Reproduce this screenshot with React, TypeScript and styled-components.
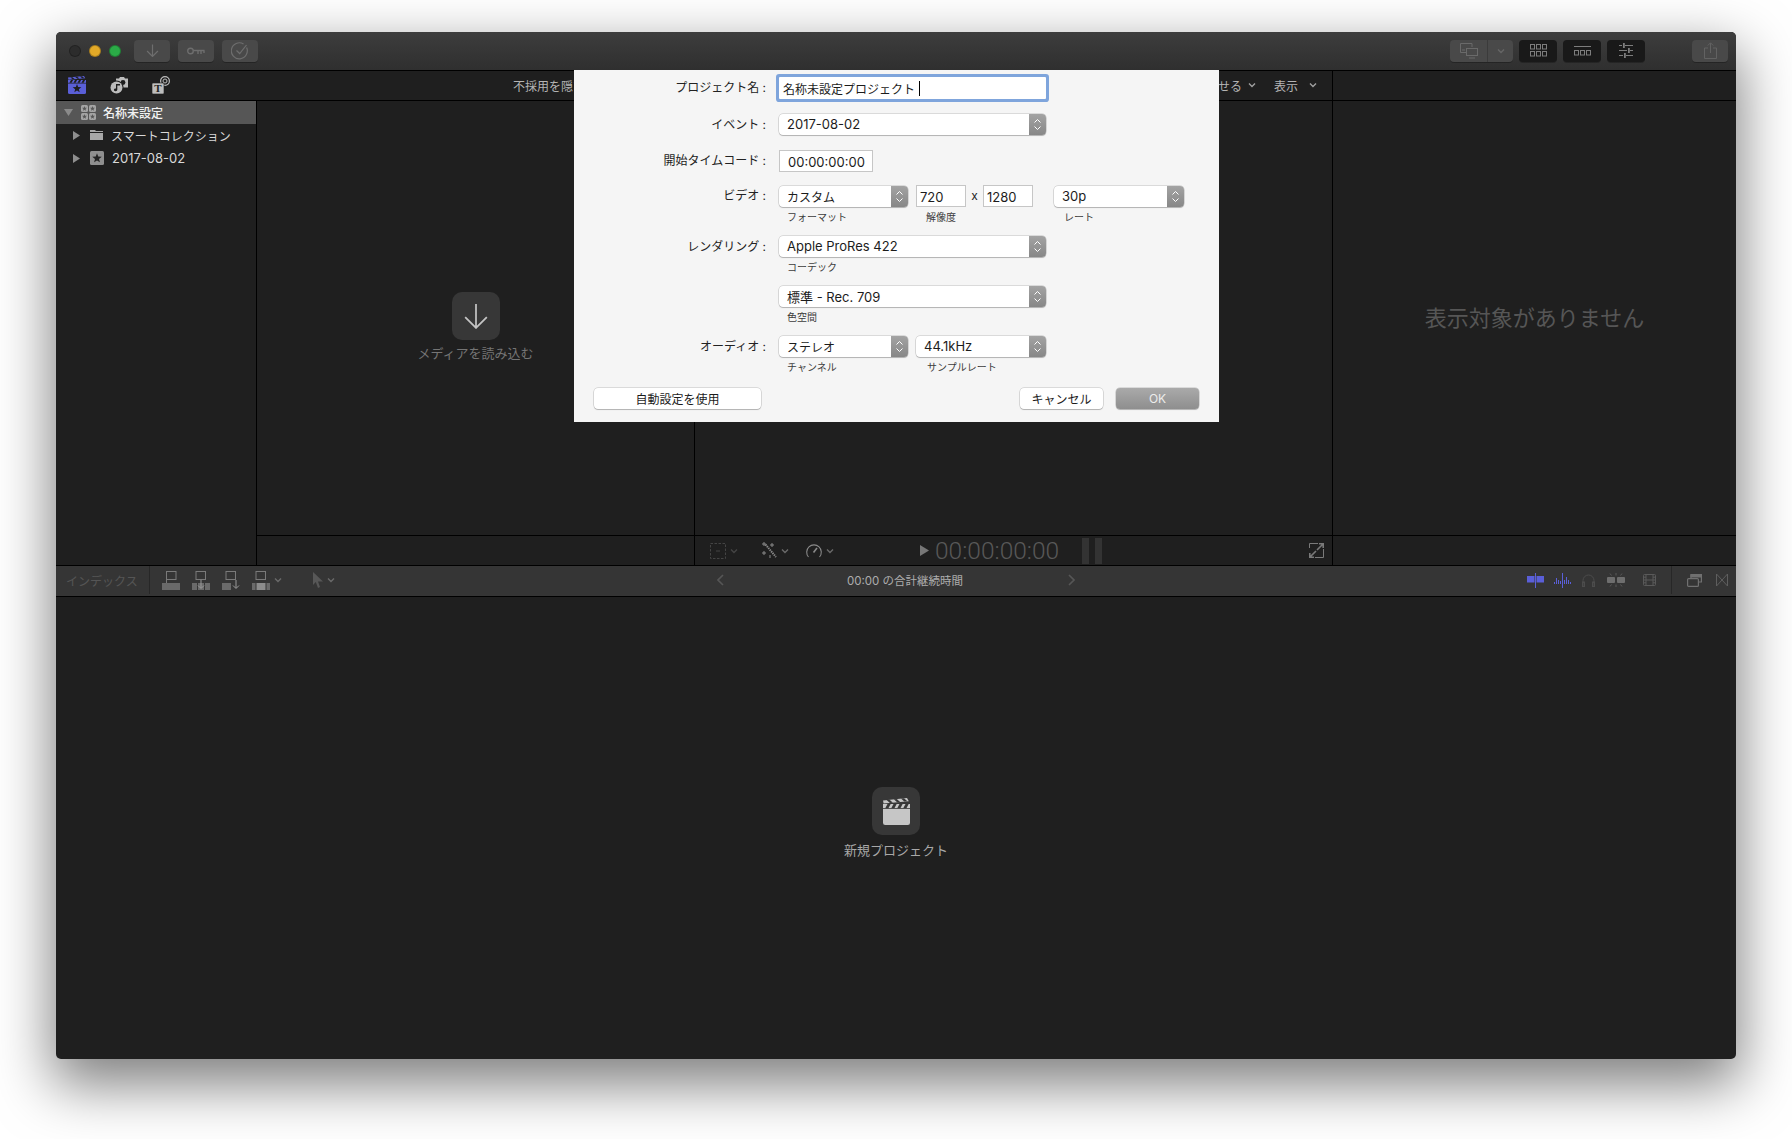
import React from "react";
import styled, { createGlobalStyle } from "styled-components";

const GlobalStyle = createGlobalStyle`
  html, body {
    margin: 0;
    background: #fff;
  }
  * {
    box-sizing: border-box;
  }
`;

const uiFont = `Inter, "Noto Sans CJK JP", sans-serif`;

const Page = styled.div`
  width: 1792px;
  height: 1139px;
  padding: 32px 56px 0;
  overflow: hidden;
  font-family: ${uiFont};
`;

const AppWindow = styled.div`
  position: relative;
  display: flex;
  flex-direction: column;
  width: 1680px;
  height: 1027px;
  background: #1f1f1f;
  border-radius: 5px;
  box-shadow: 0 22px 56px 4px rgba(0, 0, 0, 0.5);
`;

/* title bar */
const TitleBar = styled.div`
  display: flex;
  align-items: center;
  flex: none;
  height: 39px;
  padding: 0 8px 1px 13px;
  background: linear-gradient(#3d3d3d, #2f2f2f);
  border-bottom: 1px solid #000;
  border-radius: 5px 5px 0 0;
`;

const Lights = styled.div`
  display: flex;
  gap: 8px;
  margin-right: 13px;
`;

const Light = styled.span<{ $color: string }>`
  width: 12px;
  height: 12px;
  border-radius: 50%;
  background: ${({ $color }) => $color};
  border: 1px solid rgba(0, 0, 0, 0.25);
`;

const TitleGroup = styled.div<{ $gap: number }>`
  display: flex;
  gap: ${({ $gap }) => $gap}px;
`;

const TitleButton = styled.div<{ $dark?: boolean; $w?: number; $ml?: number }>`
  display: flex;
  align-items: center;
  justify-content: center;
  width: ${({ $w }) => $w ?? 36}px;
  height: 22px;
  margin-left: ${({ $ml }) => $ml ?? 0}px;
  border-radius: 4px;
  background: ${({ $dark }) => ($dark ? "#191919" : "#494949")};
  box-shadow: 0 1px 0 rgba(0, 0, 0, 0.25);
`;

const SplitSeg = styled.div<{ $w: number; $line?: boolean }>`
  display: flex;
  align-items: center;
  justify-content: center;
  width: ${({ $w }) => $w}px;
  height: 100%;
  border-left: ${({ $line }) => ($line ? "1px solid #3b3b3b" : "none")};
`;

const Spacer = styled.div`
  flex: 1;
`;

/* library toolbar */
const ToolRow = styled.div`
  display: flex;
  flex: none;
  height: 30px;
  border-bottom: 1px solid #000;
`;

const LibraryTools = styled.div`
  display: flex;
  align-items: center;
  width: 1277px;
  padding: 0 15px 1px 12px;
  border-right: 1px solid #000;
`;

const LibraryIcons = styled.div`
  display: flex;
  align-items: center;
  gap: 24px;
`;

const ToolText = styled.span<{ $ml?: number; $gap?: number }>`
  display: inline-flex;
  align-items: center;
  gap: ${({ $gap }) => $gap ?? 6}px;
  margin-left: ${({ $ml }) => $ml ?? 0}px;
  font-size: 12px;
  color: #b4b4b4;
  white-space: nowrap;
`;

/* panels */
const Panels = styled.div`
  display: flex;
  flex: none;
  height: 465px;
  border-bottom: 1px solid #000;
`;

const Sidebar = styled.div`
  flex: none;
  width: 201px;
  border-right: 1px solid #000;
`;

const TreeRow = styled.div<{ $selected?: boolean; $indent: number }>`
  display: flex;
  align-items: center;
  height: 23px;
  padding: 0 0 1px ${({ $indent }) => $indent}px;
  background: ${({ $selected }) => ($selected ? "#565656" : "transparent")};
  color: ${({ $selected }) => ($selected ? "#f2f2f2" : "#d8d8d8")};
  font-size: 12px;
  font-weight: ${({ $selected }) => ($selected ? 500 : 400)};
  white-space: nowrap;
`;

const TreeIcon = styled.span<{ $mr: number }>`
  display: flex;
  margin-right: ${({ $mr }) => $mr}px;
`;

const EventDate = styled.span`
  font-size: 13px;
`;

const PanelColumn = styled.div<{ $w: number; $line?: boolean }>`
  display: flex;
  flex-direction: column;
  flex: none;
  width: ${({ $w }) => $w}px;
  border-right: ${({ $line }) => ($line ? "1px solid #000" : "none")};
`;

const PanelBody = styled.div<{ $pt?: number; $pb?: number }>`
  display: flex;
  flex: 1;
  flex-direction: column;
  align-items: center;
  justify-content: center;
  padding-top: ${({ $pt }) => $pt ?? 0}px;
  padding-bottom: ${({ $pb }) => $pb ?? 0}px;
`;

const PanelFooter = styled.div`
  display: flex;
  align-items: center;
  flex: none;
  height: 30px;
  padding-left: 15px;
  border-top: 1px solid #000;
`;

const Tile = styled.div`
  display: flex;
  align-items: center;
  justify-content: center;
  width: 48px;
  height: 48px;
  border-radius: 10px;
  background: #373737;
`;

const TileCaption = styled.div<{ $bright?: boolean }>`
  margin-top: ${({ $bright }) => ($bright ? 7 : 5)}px;
  font-size: 13px;
  line-height: 17px;
  color: ${({ $bright }) => ($bright ? "#a8a8a8" : "#757575")};
`;

const EmptyMessage = styled.div`
  font-size: 22px;
  color: #565656;
`;

const FooterTool = styled.div<{ $ml?: number }>`
  display: flex;
  align-items: center;
  gap: 4px;
  margin-left: ${({ $ml }) => $ml ?? 0}px;
`;

const Timecode = styled.div`
  margin-left: 2px;
  font-family: Roboto, sans-serif;
  font-size: 24.5px;
  font-weight: 300;
  color: #585858;
`;

const Meter = styled.div`
  display: flex;
  gap: 6px;
  margin-left: 23px;
`;

const MeterBar = styled.span`
  width: 7px;
  height: 26px;
  background: #333;
`;

const FullscreenTool = styled.div`
  margin-left: auto;
  margin-right: 8px;
  display: flex;
`;

/* timeline bar */
const TimelineBar = styled.div`
  display: grid;
  grid-template-columns: 1fr 358px 1fr;
  align-items: center;
  flex: none;
  height: 31px;
  padding-bottom: 2px;
  background: #353535;
  border-bottom: 1px solid #000;
`;

const BarLeft = styled.div`
  display: flex;
  align-items: center;
  height: 100%;
`;

const IndexTab = styled.div`
  display: flex;
  align-items: center;
  width: 94px;
  height: 100%;
  padding-left: 10px;
  border-right: 1px solid #272727;
  font-size: 12px;
  color: #555;
`;

const BarCenter = styled.div`
  display: flex;
  align-items: center;
  justify-content: space-between;
`;

const Duration = styled.span`
  flex: 1;
  padding-left: 18px;
  text-align: center;
  font-size: 11.5px;
  color: #adadad;
`;

const BarRight = styled.div`
  display: flex;
  align-items: center;
  justify-content: flex-end;
  height: 100%;
  padding-right: 8px;
`;

const RightDivider = styled.span`
  align-self: stretch;
  width: 1px;
  margin: 0 15px;
  background: #272727;
`;

const BarTool = styled.div<{ $ml?: number }>`
  display: flex;
  align-items: center;
  gap: 4px;
  margin-left: ${({ $ml }) => $ml ?? 0}px;
`;

const TimelineBody = styled.div`
  display: flex;
  flex: 1;
  flex-direction: column;
  align-items: center;
  justify-content: center;
  padding-bottom: 10px;
  border-radius: 0 0 5px 5px;
`;

/* project dialog */
const Dialog = styled.div`
  position: absolute;
  top: 38px;
  left: 518px;
  display: flex;
  flex-direction: column;
  width: 645px;
  height: 352px;
  padding-top: 7px;
  background: #f5f5f5;
  color: #1c1c1c;
`;

const FormRow = styled.div<{ $mt: number }>`
  display: grid;
  grid-template-columns: 192px 1fr;
  column-gap: 13px;
  align-items: start;
  margin-top: ${({ $mt }) => $mt}px;
`;

const RowLabel = styled.div<{ $lh?: number }>`
  font-size: 12px;
  line-height: ${({ $lh }) => $lh ?? 21}px;
  text-align: right;
  white-space: pre;
  color: #222;
`;

const Controls = styled.div`
  display: flex;
  align-items: flex-start;
`;

const ControlCol = styled.div<{ $ml?: number }>`
  display: flex;
  flex-direction: column;
  margin-left: ${({ $ml }) => $ml ?? 0}px;
`;

const SubLabel = styled.div<{ $pl?: number }>`
  height: 12px;
  margin-top: 4px;
  padding-left: ${({ $pl }) => $pl ?? 8}px;
  font-size: 10px;
  line-height: 12px;
  color: #3c3c3c;
  white-space: nowrap;
`;

const Select = styled.div<{ $w: number; $inset?: boolean }>`
  display: flex;
  align-items: center;
  justify-content: space-between;
  width: ${({ $w }) => $w}px;
  height: 21px;
  margin-top: ${({ $inset }) => ($inset ? 1 : 0)}px;
  padding-left: 8px;
  background: #fff;
  border-radius: 4px;
  box-shadow: 0 0 0 0.5px rgba(0, 0, 0, 0.22), 0 1px 1px rgba(0, 0, 0, 0.18);
  font-size: 13px;
  overflow: hidden;
`;

const SelectText = styled.span<{ $jp?: boolean }>`
  padding-bottom: 1px;
  font-size: ${({ $jp }) => ($jp ? 12 : 13)}px;
`;

const Stepper = styled.span`
  display: flex;
  align-items: center;
  justify-content: center;
  width: 17px;
  height: 100%;
  background: linear-gradient(#a3a3a3, #878787);
`;

const TextBox = styled.div<{ $w: number; $pl?: number }>`
  display: flex;
  align-items: center;
  width: ${({ $w }) => $w}px;
  height: 22px;
  padding: 1px 0 0 ${({ $pl }) => $pl ?? 3}px;
  background: #fff;
  border: 1px solid #c6c6c6;
  font-size: 13px;
`;

const NameBox = styled(TextBox)`
  padding: 0 0 0 4px;
  border: none;
  border-radius: 1px;
  box-shadow: 0 0 0 3px #7fa5dc;
  font-size: 12px;
`;

const Caret = styled.span`
  width: 1px;
  height: 15px;
  margin-left: 4px;
  background: #000;
`;

const Times = styled.span`
  width: 17px;
  line-height: 22px;
  text-align: center;
  font-size: 12px;
`;

const DialogFooter = styled.div`
  display: flex;
  margin-top: 15px;
  padding: 0 20px;
`;

const DialogButton = styled.div<{ $w: number; $primary?: boolean; $ml?: string }>`
  display: flex;
  align-items: center;
  justify-content: center;
  width: ${({ $w }) => $w}px;
  height: 21px;
  padding-bottom: 1px;
  margin-left: ${({ $ml }) => $ml ?? "0"};
  border-radius: 4px;
  background: ${({ $primary }) => ($primary ? "linear-gradient(#aaa, #8e8e8e)" : "#fff")};
  color: ${({ $primary }) => ($primary ? "#ececec" : "#1c1c1c")};
  box-shadow: 0 0 0 0.5px rgba(0, 0, 0, 0.22), 0 1px 1px rgba(0, 0, 0, 0.18);
  font-size: 12px;
`;

/* drawings */
const starPoints = (cx: number, cy: number, r: number) =>
  Array.from({ length: 10 }, (_, i) => {
    const a = (Math.PI / 5) * i - Math.PI / 2;
    const d = i % 2 ? r * 0.42 : r;
    return `${(cx + d * Math.cos(a)).toFixed(2)},${(cy + d * Math.sin(a)).toFixed(2)}`;
  }).join(" ");

const Chevron = ({ color = "#6a6a6a" }: { color?: string }) => (
  <svg width="8" height="6" viewBox="0 0 8 6" fill="none">
    <path d="M1 1.5 4 4.5 7 1.5" stroke={color} strokeWidth="1.4" />
  </svg>
);

const StepArrows = () => (
  <svg width="9" height="13" viewBox="0 0 9 13" fill="none" stroke="#fff" strokeWidth="1">
    <path d="M1.5 4.5 4.5 1.5 7.5 4.5M1.5 8.5 4.5 11.5 7.5 8.5" />
  </svg>
);

const ImportGlyph = ({ size, color, width = 1.4 }: { size: number; color: string; width?: number }) => (
  <svg width={size} height={size} viewBox="0 0 24 24" fill="none" stroke={color} strokeWidth={width}>
    <path d="M12 1V23M2 13 12 23 22 13" />
  </svg>
);

const KeyGlyph = () => (
  <svg width="18" height="10" viewBox="0 0 18 10" fill="none" stroke="#6e6e6e" strokeWidth="1.4">
    <circle cx="3.5" cy="5" r="2.8" />
    <path d="M6.5 4.5H17.5M11 4.5V8M14 4.5V8M17 4.5V7" />
  </svg>
);

const CheckGlyph = () => (
  <svg width="18" height="18" viewBox="0 0 18 18" fill="none" stroke="#6e6e6e" strokeWidth="1.2">
    <path d="M15.6 5.5A8 8 0 1 1 12.5 2" />
    <path d="M5.5 8.5 8.7 11.5 15.5 3" />
  </svg>
);

const MonitorGlyph = () => (
  <svg width="18" height="16" viewBox="0 0 18 16" fill="none" stroke="#6a6a6a" strokeWidth="1">
    <path d="M6 9.5H.5V.5H12V4" />
    <rect x="6.5" y="5.5" width="11" height="7" />
    <path d="M9 15H15M2 7H5" />
  </svg>
);

const GridGlyph = () => (
  <svg width="17" height="13" viewBox="0 0 17 13" fill="none" stroke="#7d7d7d" strokeWidth="1">
    {[0.5, 6.5, 12.5].map((x) =>
      [0.5, 7.5].map((y) => <rect key={`${x}-${y}`} x={x} y={y} width="4" height="4.5" />)
    )}
  </svg>
);

const StripGlyph = () => (
  <svg width="17" height="10" viewBox="0 0 17 10" fill="none" stroke="#7d7d7d" strokeWidth="1">
    <path d="M0 .5H17" />
    {[0.5, 6.5, 12.5].map((x) => (
      <rect key={x} x={x} y="4.5" width="4" height="4.5" />
    ))}
  </svg>
);

const SlidersGlyph = () => (
  <svg width="14" height="15" viewBox="0 0 14 15" fill="#7d7d7d" stroke="none">
    <path d="M0 2H3V3H0ZM6 2H14V3H6ZM0 7H8V8H0ZM11 7H14V8H11ZM0 12H4V13H0ZM7 12H14V13H7Z" />
    <rect x="4" y="0" width="1.8" height="5" />
    <rect x="9" y="5" width="1.8" height="5" />
    <rect x="5" y="10" width="1.8" height="5" />
  </svg>
);

const ShareGlyph = () => (
  <svg width="13" height="17" viewBox="0 0 13 17" fill="none" stroke="#626262" strokeWidth="1">
    <path d="M4 6H.5V16.5H12.5V6H9M6.5 11V1M3.8 3.5 6.5 .8 9.2 3.5" />
  </svg>
);

const ClapperGlyph = ({ size, color, star, gap }: { size: number; color: string; star?: string; gap: string }) => (
  <svg width={size} height={size} viewBox="0 0 18 18">
    <path d="M0 7.4H18V16.5A1.5 1.5 0 0 1 16.5 18H1.5A1.5 1.5 0 0 1 0 16.5Z" fill={color} />
    <path d="M0 4H18V6.8H0Z" fill={color} />
    <path d="M0 1.6 16 0 17.2 2.2 .4 3.7Z" fill={color} />
    <path
      d="M3 4 1.5 6.8H3.6L5.1 4ZM7 4 5.5 6.8H7.6L9.1 4ZM11 4 9.5 6.8H11.6L13.1 4ZM15 4 13.5 6.8H15.6L17.1 4ZM2.4 1.4 4.6 3.3 6.6 3.1 4.4 1.2ZM7.2 .9 9.4 2.8 11.4 2.6 9.2 .7ZM12 .4 14.2 2.3 16.2 2.1 14 .2Z"
      fill={gap}
    />
    {star && <polygon points={starPoints(9, 12.6, 4.6)} fill={star} />}
  </svg>
);

const MediaGlyph = () => (
  <svg width="18" height="18" viewBox="0 0 18 18" fill="#bdbdbd">
    <path d="M6 2.5H9L10 1H14L15 2.5H18V11.5H6Z" />
    <circle cx="13" cy="6.5" r="2.4" fill="#1f1f1f" />
    <circle cx="6.5" cy="11.5" r="7" fill="#1f1f1f" />
    <circle cx="6.5" cy="11.5" r="6" />
    <path d="M6 8H10V9.5H7.3V13.8A1.7 1.3 0 1 1 6 12.6Z" fill="#1f1f1f" />
  </svg>
);

const TitleGlyph = () => (
  <svg width="18" height="18" viewBox="0 0 18 18">
    <circle cx="13" cy="5" r="4.4" fill="none" stroke="#bdbdbd" strokeWidth="1.2" />
    <circle cx="13" cy="5" r="2" fill="none" stroke="#bdbdbd" strokeWidth="1" />
    <rect x="0" y="7" width="12" height="11" rx="1" fill="#bdbdbd" stroke="#1f1f1f" strokeWidth=".6" />
    <text x="6" y="16.4" textAnchor="middle" fontSize="11" fontWeight="700" fontFamily="Liberation Serif, serif" fill="#1f1f1f">
      T
    </text>
  </svg>
);

const TreeTriangle = ({ open }: { open?: boolean }) =>
  open ? (
    <svg width="9" height="7" viewBox="0 0 9 7">
      <path d="M0 0H9L4.5 7Z" fill="#8a8a8a" />
    </svg>
  ) : (
    <svg width="7" height="9" viewBox="0 0 7 9">
      <path d="M0 0V9L7 4.5Z" fill="#8e8e8e" />
    </svg>
  );

const LibraryGlyph = () => (
  <svg width="15" height="15" viewBox="0 0 15 15">
    {[0, 8].map((x) =>
      [0, 8].map((y) => (
        <g key={`${x}-${y}`}>
          <rect x={x} y={y} width="7" height="7" rx="1.5" fill="#a4a4a4" />
          <polygon points={starPoints(x + 3.5, y + 3.6, 2.6)} fill="#565656" />
        </g>
      ))
    )}
  </svg>
);

const FolderGlyph = () => (
  <svg width="13" height="10" viewBox="0 0 13 10" fill="#a8a8a8">
    <path d="M0 0H5L6 1H13V2H0ZM0 3H13V10H0Z" />
  </svg>
);

const EventGlyph = () => (
  <svg width="14" height="14" viewBox="0 0 14 14">
    <rect width="14" height="14" rx="1.5" fill="#8f8f8f" />
    <polygon points={starPoints(7, 7.3, 5)} fill="#232323" />
  </svg>
);

const TransformGlyph = () => (
  <svg width="16" height="16" viewBox="0 0 16 16" fill="none" stroke="#444" strokeWidth="1" strokeDasharray="2.5 1.5">
    <rect x=".5" y=".5" width="15" height="15" />
    <path d="M6 8H10" strokeDasharray="none" />
  </svg>
);

const WandGlyph = () => (
  <svg width="16" height="17" viewBox="0 0 16 17" fill="none" stroke="#8a8a8a" strokeWidth="1">
    <path d="M4.5 2.5 15 15" strokeWidth="2" strokeDasharray="1.4 .8" />
    <path d="M3 0V4M1 2H5M11 1V5M9 3H13M3 9V13M1 11H5M9 13V16" />
  </svg>
);

const GaugeGlyph = () => (
  <svg width="16" height="14" viewBox="0 0 16 14" fill="none" stroke="#8a8a8a" strokeWidth="1.1">
    <path d="M2.5 13A7.3 7.3 0 1 1 13.5 13" />
    <path d="M7.5 8.5 11 4" strokeWidth="1.6" />
  </svg>
);

const PlayGlyph = () => (
  <svg width="9" height="11" viewBox="0 0 9 11">
    <path d="M0 0V11L9 5.5Z" fill="#777" />
  </svg>
);

const ExpandGlyph = () => (
  <svg width="15" height="15" viewBox="0 0 15 15" fill="none" stroke="#7a7a7a" strokeWidth="1">
    <path d="M.5 5V.5H9M14.5 6V14.5H6" />
    <path d="M8 7 14 1M10 .8H14.2V5M7 8 1 14M.8 10V14.2H5" strokeWidth="1.6" />
  </svg>
);

const ClipTool = ({ variant }: { variant: number }) => (
  <svg width="18" height="19" viewBox="0 0 18 19">
    <rect x={variant === 0 ? 4.5 : 4} y=".5" width="9.5" height="8" fill="none" stroke="#7a7a7a" />
    {variant === 0 && (
      <>
        <path d="M4.5 8V12" stroke="#7a7a7a" />
        <rect y="12" width="18" height="7" fill="#6a6a6a" />
      </>
    )}
    {variant === 1 && (
      <>
        <rect y="12" width="5" height="7" fill="#6a6a6a" />
        <rect x="13" y="12" width="5" height="7" fill="#6a6a6a" />
        <rect x="6" y="12" width="6" height="7" fill="#6a6a6a" />
        <path d="M9 9V17M6 14.5 9 17.5 12 14.5" fill="none" stroke="#9a9a9a" />
      </>
    )}
    {variant === 2 && (
      <>
        <rect y="12" width="9" height="7" fill="#6a6a6a" />
        <path d="M14 9V17M11 14.5 14 17.5 17 14.5" fill="none" stroke="#9a9a9a" />
      </>
    )}
    {variant === 3 && (
      <>
        <rect y="12" width="3.5" height="7" fill="#6a6a6a" />
        <rect x="14.5" y="12" width="3.5" height="7" fill="#6a6a6a" />
        <rect x="4.5" y="12" width="9" height="7" fill="#8c8c8c" />
      </>
    )}
  </svg>
);

const PointerGlyph = () => (
  <svg width="10" height="16" viewBox="0 0 10 16">
    <path d="M0 0V13L2.8 10 5 16 7 15 5 9.5H10Z" fill="#575757" />
  </svg>
);

const NavChevron = ({ flip }: { flip?: boolean }) => (
  <svg width="7" height="12" viewBox="0 0 7 12" fill="none" stroke="#565656" strokeWidth="1.6">
    <path d={flip ? "M1 1 6 6 1 11" : "M6 1 1 6 6 11"} />
  </svg>
);

const SkimGlyph = () => (
  <svg width="17" height="15" viewBox="0 0 17 15" fill="#5a5fd8">
    <rect y="3" width="7.5" height="6.5" />
    <rect x="9.5" y="3" width="7.5" height="6.5" />
    <rect x="8" y="0" width="1" height="15" />
  </svg>
);

const wavePeaks = [2, 6, 4, 3, 15, 4, 7, 4, 2];

const WaveGlyph = () => (
  <svg width="17" height="15" viewBox="0 0 17 15" fill="#5a5fd8">
    {wavePeaks.map((h, i) => (
      <rect key={i} x={i * 2} y={h === 15 ? 0 : 11 - h} width="1" height={h} />
    ))}
  </svg>
);

const HeadphoneGlyph = () => (
  <svg width="13" height="13" viewBox="0 0 13 13" fill="none" stroke="#4c4c4c" strokeWidth="1">
    <path d="M1 12V6.5A5.5 5.5 0 0 1 12 6.5V12" />
    <rect x=".5" y="8" width="2" height="4.5" />
    <rect x="10.5" y="8" width="2" height="4.5" />
  </svg>
);

const SnapGlyph = () => (
  <svg width="18" height="14" viewBox="0 0 18 14">
    <rect y="4" width="8" height="6" rx="1" fill="#6e6e6e" />
    <rect x="10" y="4" width="8" height="6" rx="1" fill="#6e6e6e" />
    <path d="M9 0V2.5M9 11.5V14M3 .5 4.5 2.5M15 .5 13.5 2.5M3 13.5 4.5 11.5M15 13.5 13.5 11.5" stroke="#5a5a5a" />
  </svg>
);

const FilmGlyph = () => (
  <svg width="13" height="13" viewBox="0 0 13 13" fill="none" stroke="#5a5a5a" strokeWidth="1">
    <rect x=".5" y=".5" width="12" height="11" rx="1" />
    <path d="M3 .5V11.5M10 .5V11.5M3 6H10M.5 3.2H3M.5 6H3M.5 8.8H3M10 3.2H12.5M10 6H12.5M10 8.8H12.5" />
  </svg>
);

const WindowsGlyph = () => (
  <svg width="15" height="13" viewBox="0 0 15 13" fill="none" stroke="#707070" strokeWidth="1.2">
    <rect x=".6" y="4.6" width="10.8" height="7.8" rx="1" />
    <path d="M4 4.5V.6H14.4V8H11.5" />
    <path d="M4 1H14.4V3H4Z" fill="#707070" />
  </svg>
);

const BowtieGlyph = () => (
  <svg width="12" height="12" viewBox="0 0 12 12" fill="none" stroke="#5e5e5e" strokeWidth="1">
    <path d="M.5 0V12L11.5 0V12Z" />
  </svg>
);

const StepperSelect = ({ w, inset, jp, children }: { w: number; inset?: boolean; jp?: boolean; children: React.ReactNode }) => (
  <Select $w={w} $inset={inset}>
    <SelectText $jp={jp}>{children}</SelectText>
    <Stepper>
      <StepArrows />
    </Stepper>
  </Select>
);

const App = () => (
  <Page>
    <GlobalStyle />
    <AppWindow>
      <TitleBar>
        <Lights>
          <Light $color="#2c2c2c" />
          <Light $color="#e2a928" />
          <Light $color="#2bab47" />
        </Lights>
        <TitleGroup $gap={8}>
          <TitleButton>
            <ImportGlyph size={13} color="#6e6e6e" width={2.2} />
          </TitleButton>
          <TitleButton>
            <KeyGlyph />
          </TitleButton>
          <TitleButton>
            <CheckGlyph />
          </TitleButton>
        </TitleGroup>
        <Spacer />
        <TitleGroup $gap={6}>
          <TitleButton $w={63}>
            <SplitSeg $w={37}>
              <MonitorGlyph />
            </SplitSeg>
            <SplitSeg $w={26} $line>
              <Chevron color="#666" />
            </SplitSeg>
          </TitleButton>
          <TitleButton $dark $w={38}>
            <GridGlyph />
          </TitleButton>
          <TitleButton $dark $w={38}>
            <StripGlyph />
          </TitleButton>
          <TitleButton $dark $w={38}>
            <SlidersGlyph />
          </TitleButton>
        </TitleGroup>
        <TitleButton $ml={47}>
          <ShareGlyph />
        </TitleButton>
      </TitleBar>

      <ToolRow>
        <LibraryTools>
          <LibraryIcons>
            <ClapperGlyph size={18} color="#5a5fd8" star="#1f1f1f" gap="#1f1f1f" />
            <MediaGlyph />
            <TitleGlyph />
          </LibraryIcons>
          <ToolText $ml={343}>不採用を隠す</ToolText>
          <Spacer />
          <ToolText>
            クリップを寄せる
            <Chevron color="#a0a0a0" />
          </ToolText>
          <ToolText $ml={18} $gap={11}>
            表示
            <Chevron color="#a0a0a0" />
          </ToolText>
        </LibraryTools>
      </ToolRow>

      <Panels>
        <Sidebar>
          <TreeRow $selected $indent={8}>
            <TreeIcon $mr={8}>
              <TreeTriangle open />
            </TreeIcon>
            <TreeIcon $mr={7}>
              <LibraryGlyph />
            </TreeIcon>
            名称未設定
          </TreeRow>
          <TreeRow $indent={17}>
            <TreeIcon $mr={10}>
              <TreeTriangle />
            </TreeIcon>
            <TreeIcon $mr={8}>
              <FolderGlyph />
            </TreeIcon>
            スマートコレクション
          </TreeRow>
          <TreeRow $indent={17}>
            <TreeIcon $mr={10}>
              <TreeTriangle />
            </TreeIcon>
            <TreeIcon $mr={8}>
              <EventGlyph />
            </TreeIcon>
            <EventDate>2017-08-02</EventDate>
          </TreeRow>
        </Sidebar>

        <PanelColumn $w={438} $line>
          <PanelBody $pt={18}>
            <Tile>
              <ImportGlyph size={26} color="#c4c4c4" width={1.6} />
            </Tile>
            <TileCaption>メディアを読み込む</TileCaption>
          </PanelBody>
          <PanelFooter />
        </PanelColumn>

        <PanelColumn $w={638} $line>
          <PanelBody />
          <PanelFooter>
            <FooterTool>
              <TransformGlyph />
              <Chevron color="#444" />
            </FooterTool>
            <FooterTool $ml={23}>
              <WandGlyph />
              <Chevron />
            </FooterTool>
            <FooterTool $ml={17}>
              <GaugeGlyph />
              <Chevron />
            </FooterTool>
            <FooterTool $ml={86}>
              <PlayGlyph />
              <Timecode>00:00:00:00</Timecode>
            </FooterTool>
            <Meter>
              <MeterBar />
              <MeterBar />
            </Meter>
            <FullscreenTool>
              <ExpandGlyph />
            </FullscreenTool>
          </PanelFooter>
        </PanelColumn>

        <PanelColumn $w={403}>
          <PanelBody $pb={5}>
            <EmptyMessage>表示対象がありません</EmptyMessage>
          </PanelBody>
          <PanelFooter />
        </PanelColumn>
      </Panels>

      <TimelineBar>
        <BarLeft>
          <IndexTab>インデックス</IndexTab>
          <BarTool $ml={12}>
            <ClipTool variant={0} />
          </BarTool>
          <BarTool $ml={12}>
            <ClipTool variant={1} />
          </BarTool>
          <BarTool $ml={12}>
            <ClipTool variant={2} />
          </BarTool>
          <BarTool $ml={12}>
            <ClipTool variant={3} />
            <Chevron />
          </BarTool>
          <BarTool $ml={31}>
            <PointerGlyph />
            <Chevron />
          </BarTool>
        </BarLeft>
        <BarCenter>
          <NavChevron />
          <Duration>00:00 の合計継続時間</Duration>
          <NavChevron flip />
        </BarCenter>
        <BarRight>
          <BarTool>
            <SkimGlyph />
          </BarTool>
          <BarTool $ml={10}>
            <WaveGlyph />
          </BarTool>
          <BarTool $ml={11}>
            <HeadphoneGlyph />
          </BarTool>
          <BarTool $ml={12}>
            <SnapGlyph />
          </BarTool>
          <BarTool $ml={18}>
            <FilmGlyph />
          </BarTool>
          <RightDivider />
          <WindowsGlyph />
          <BarTool $ml={14}>
            <BowtieGlyph />
          </BarTool>
        </BarRight>
      </TimelineBar>

      <TimelineBody>
        <Tile>
          <ClapperGlyph size={27} color="#c6c6c6" gap="#373737" />
        </Tile>
        <TileCaption $bright>新規プロジェクト</TileCaption>
      </TimelineBody>

      <Dialog>
        <FormRow $mt={0}>
          <RowLabel $lh={22}>プロジェクト名 :</RowLabel>
          <Controls>
            <NameBox $w={267}>
              名称未設定プロジェクト
              <Caret />
            </NameBox>
          </Controls>
        </FormRow>

        <FormRow $mt={15}>
          <RowLabel>イベント :</RowLabel>
          <Controls>
            <StepperSelect w={267}>2017-08-02</StepperSelect>
          </Controls>
        </FormRow>

        <FormRow $mt={15}>
          <RowLabel $lh={22}>開始タイムコード :</RowLabel>
          <Controls>
            <TextBox $w={94} $pl={8}>
              00:00:00:00
            </TextBox>
          </Controls>
        </FormRow>

        <FormRow $mt={13}>
          <RowLabel $lh={22}>ビデオ :</RowLabel>
          <Controls>
            <ControlCol>
              <StepperSelect w={129} inset jp>
                カスタム
              </StepperSelect>
              <SubLabel>フォーマット</SubLabel>
            </ControlCol>
            <ControlCol $ml={8}>
              <TextBox $w={50}>720</TextBox>
              <SubLabel $pl={10}>解像度</SubLabel>
            </ControlCol>
            <Times>x</Times>
            <TextBox $w={50}>1280</TextBox>
            <ControlCol $ml={21}>
              <StepperSelect w={130} inset>
                30p
              </StepperSelect>
              <SubLabel $pl={10}>レート</SubLabel>
            </ControlCol>
          </Controls>
        </FormRow>

        <FormRow $mt={13}>
          <RowLabel>レンダリング :</RowLabel>
          <Controls>
            <ControlCol>
              <StepperSelect w={267}>Apple ProRes 422</StepperSelect>
              <SubLabel>コーデック</SubLabel>
            </ControlCol>
          </Controls>
        </FormRow>

        <FormRow $mt={13}>
          <RowLabel />
          <Controls>
            <ControlCol>
              <StepperSelect w={267}>標準 - Rec. 709</StepperSelect>
              <SubLabel>色空間</SubLabel>
            </ControlCol>
          </Controls>
        </FormRow>

        <FormRow $mt={13}>
          <RowLabel>オーディオ :</RowLabel>
          <Controls>
            <ControlCol>
              <StepperSelect w={129} jp>
                ステレオ
              </StepperSelect>
              <SubLabel>チャンネル</SubLabel>
            </ControlCol>
            <ControlCol $ml={8}>
              <StepperSelect w={130}>44.1kHz</StepperSelect>
              <SubLabel $pl={11}>サンプルレート</SubLabel>
            </ControlCol>
          </Controls>
        </FormRow>

        <DialogFooter>
          <DialogButton $w={167}>自動設定を使用</DialogButton>
          <DialogButton $w={83} $ml="auto">
            キャンセル
          </DialogButton>
          <DialogButton $w={83} $ml="13px" $primary>
            OK
          </DialogButton>
        </DialogFooter>
      </Dialog>
    </AppWindow>
  </Page>
);

export default App;
